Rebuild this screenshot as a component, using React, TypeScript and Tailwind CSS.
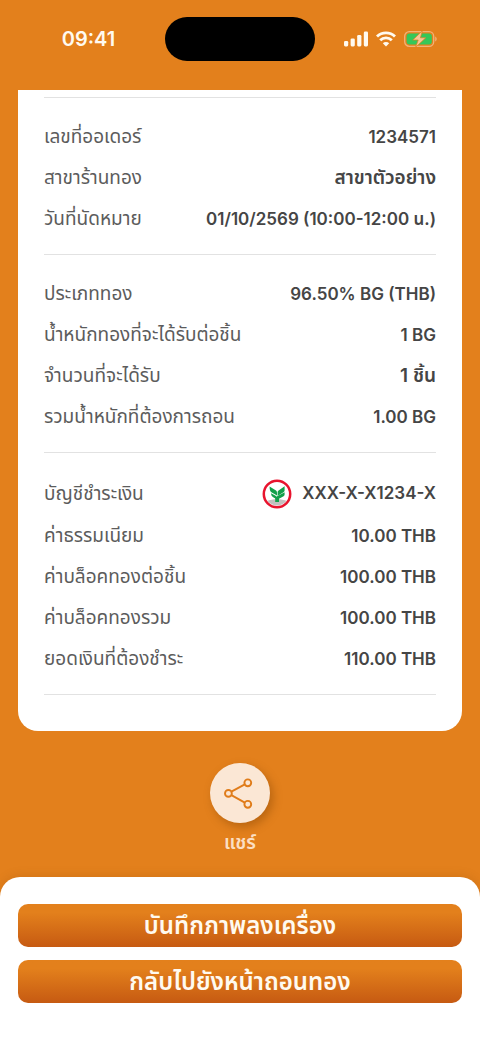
import React from 'react';

type Row = {
  label: string;
  value: string;
  bank?: boolean;
  thai?: boolean;
};

const sections: { id: string; rows: Row[] }[] = [
  {
    id: 'order',
    rows: [
      { label: 'เลขที่ออเดอร์', value: '1234571' },
      { label: 'สาขาร้านทอง', value: 'สาขาตัวอย่าง', thai: true },
      { label: 'วันที่นัดหมาย', value: '01/10/2569 (10:00-12:00 น.)' },
    ],
  },
  {
    id: 'gold',
    rows: [
      { label: 'ประเภททอง', value: '96.50% BG (THB)' },
      { label: 'น้ำหนักทองที่จะได้รับต่อชิ้น', value: '1 BG' },
      { label: 'จำนวนที่จะได้รับ', value: '1 ชิ้น', thai: true },
      { label: 'รวมน้ำหนักที่ต้องการถอน', value: '1.00 BG' },
    ],
  },
  {
    id: 'payment',
    rows: [
      { label: 'บัญชีชำระเงิน', value: 'XXX-X-X1234-X', bank: true },
      { label: 'ค่าธรรมเนียม', value: '10.00 THB' },
      { label: 'ค่าบล็อคทองต่อชิ้น', value: '100.00 THB' },
      { label: 'ค่าบล็อคทองรวม', value: '100.00 THB' },
      { label: 'ยอดเงินที่ต้องชำระ', value: '110.00 THB' },
    ],
  },
];

const actions = ['บันทึกภาพลงเครื่อง', 'กลับไปยังหน้าถอนทอง'];

const BankLogo: React.FC = () => (
  <svg viewBox="0 0 30 30" className="h-[30px] w-[30px]" aria-hidden="true">
    <circle cx="15" cy="15" r="13.4" fill="#fff" />
    <path d="M5.4 21.8c4.4-2.2 14.8-2.2 19.2 0A12.2 12.2 0 0 1 5.4 21.8Z" fill="#c4c0bf" />
    {/* Leaves and stem */}
    <path d="M7.6 7.4 14 11.6c.8.6 1 1.4 1 2.4v2.6l-5.2-3c-1.6-1-2.2-3-2.2-6.2Z" fill="#12a04a" />
    <path d="M9 14.2l4.6 2.6c.8.5 1 1.2 1 2v1.4l-3.4-2c-1.4-.8-2-2-2.2-4Z" fill="#12a04a" />
    <path d="M22.6 7.2v4.4c0 .6-.2 1-.8 1.4L15.6 17v-3.8c0-.8.3-1.4 1-1.8Z" fill="#12a04a" />
    <path d="M22.6 13.2v2.4c0 .8-.4 1.2-1 1.6l-4.6 2.6v3.2h-3.8v-3.4c0-1 .4-1.4 1-1.8Z" fill="#12a04a" />
    <circle cx="15" cy="15" r="13.2" fill="none" stroke="#e8142e" strokeWidth="2.5" />
  </svg>
);

const SignalIcon: React.FC = () => (
  <svg viewBox="0 0 24 16" className="h-4 w-6" fill="#fffaf0" aria-hidden="true">
    <rect x="0" y="10" width="4.2" height="5.4" rx="1.3" />
    <rect x="6.6" y="7.4" width="4.2" height="8" rx="1.3" />
    <rect x="13.2" y="4" width="4.2" height="11.4" rx="1.3" />
    <rect x="19.8" y="0.6" width="4.2" height="14.8" rx="1.3" />
  </svg>
);

const WifiIcon: React.FC = () => (
  <svg viewBox="0 0 20 16" className="h-4 w-5" fill="none" stroke="#fffaf0" strokeWidth="2.9" aria-hidden="true">
    <path d="M1 5.5a13 13 0 0 1 18 0" />
    <path d="M4.2 9.2a8.4 8.4 0 0 1 11.6 0" />
    <path d="m10 15.6-3.2-3.3a4.6 4.6 0 0 1 6.4 0Z" fill="#fffaf0" stroke="none" />
  </svg>
);

const BatteryIcon: React.FC = () => (
  <svg viewBox="0 0 33 18" className="h-[18px] w-[33px]" aria-hidden="true">
    <rect x="0.7" y="1.7" width="29" height="14.6" rx="4.6" fill="none" stroke="#f2b277" strokeWidth="1.3" />
    <rect x="2.6" y="3.5" width="25.2" height="11" rx="3" fill="#35c759" />
    <path d="M31.2 6.6c2 .8 2 4 0 4.8Z" fill="#f2b277" />
    <path
      d="M18.4.8 8.8 10h5.4l-2.6 7.2L21.8 7.8h-5.4Z"
      fill="#f6c696"
      stroke="#e3801c"
      strokeWidth="0.7"
      strokeLinejoin="round"
    />
  </svg>
);

const ShareIcon: React.FC = () => (
  <svg viewBox="0 0 32 32" className="h-8 w-8" fill="none" stroke="#e07c1a" strokeWidth="1.9" aria-hidden="true">
    <path d="m7.4 14.6 13.4-7.2M7.4 18.2l13.4 7.4" />
    <circle cx="4.4" cy="16.4" r="3.4" />
    <circle cx="23.8" cy="5.8" r="3.4" />
    <circle cx="23.8" cy="27.3" r="3.4" />
  </svg>
);

const App: React.FC = () => {
  return (
    <div className="flex min-h-screen flex-col bg-[#e3801c] font-['Inter','Noto_Sans_Thai','Noto_Sans',sans-serif]">
      {/* Status bar */}
      <header className="grid h-[90px] grid-cols-[1fr_150px_1fr] items-start pt-[17px]">
        <div className="flex h-11 items-center justify-center pl-3 text-xl font-semibold text-[#fffaf0]">09:41</div>
        <div className="h-11 rounded-full bg-black" />
        <div className="flex h-11 items-center justify-center gap-2 pr-3.5">
          <SignalIcon />
          <WifiIcon />
          <BatteryIcon />
        </div>
      </header>

      {/* Receipt */}
      <main className="mx-[18px] rounded-b-[20px] bg-white px-[26px] pt-[7px] pb-9">
        {sections.map((section) => (
          <dl key={section.id} className="border-t border-[#e2e2e2] pt-[19px] pb-[14px]">
            {section.rows.map((row) => (
              <div
                key={row.label}
                className={`flex items-center justify-between whitespace-nowrap ${row.bank ? 'h-11' : 'h-[41px]'}`}
              >
                <dt className="text-[19px] text-[#5c5c5c]">{row.label}</dt>
                <dd
                  className={`flex items-center gap-2.5 font-semibold text-[#454545] ${row.thai ? 'text-[19px]' : 'text-[17px]'}`}
                >
                  {row.bank && <BankLogo />}
                  {row.value}
                </dd>
              </div>
            ))}
          </dl>
        ))}
        <hr className="border-t border-[#e2e2e2]" />
      </main>

      {/* Share */}
      <div className="flex flex-1 flex-col items-center pt-8 pb-[19px]">
        <button
          type="button"
          aria-labelledby="share-label"
          className="flex h-[60px] w-[60px] items-center justify-center rounded-full bg-[#fbe7d5] shadow-[3px_4px_10px_rgba(120,60,0,0.4)]"
        >
          <ShareIcon />
        </button>
        <span id="share-label" className="mt-1.5 text-[19px] leading-7 font-semibold text-[#fbdfc3]">
          แชร์
        </span>
      </div>

      {/* Bottom actions */}
      <footer className="flex flex-col gap-[13px] rounded-t-[20px] bg-white px-[18px] pt-[27px] pb-[41px] shadow-[0_-2px_10px_rgba(120,60,0,0.15)]">
        {actions.map((action) => (
          <button
            key={action}
            type="button"
            className="h-[43px] rounded-[10px] bg-linear-to-b from-[#e3801c] from-20% to-[#c65a12] text-2xl font-semibold text-[#fffaf0]"
          >
            {action}
          </button>
        ))}
      </footer>
    </div>
  );
};

export default App;
